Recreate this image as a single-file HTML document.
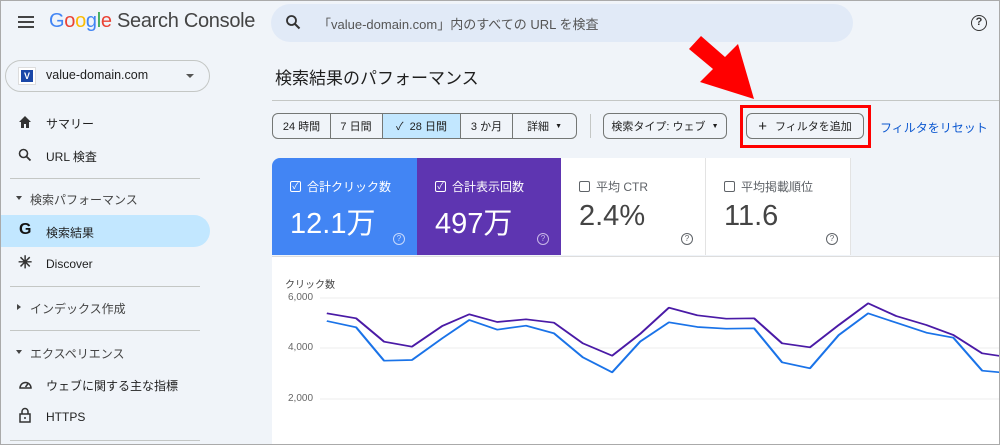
<!DOCTYPE html>
<html><head><meta charset="utf-8"><style>
*{box-sizing:border-box;margin:0;padding:0}
body{width:1000px;height:445px;overflow:hidden;background:#f0f4f9;font-family:"Liberation Sans","Noto Sans CJK JP",sans-serif;color:#1f1f1f;position:relative}
.a{position:absolute}
.frame{left:0;top:0;width:1000px;height:445px;border:1px solid #aaa;z-index:50;pointer-events:none}
.nav{font-size:12px;color:#1f1f1f;left:46px}
.ico{left:18px}
.hr{left:10px;width:190px;height:1px;background:#c4c7c5}
.sec{font-size:12px;color:#444;left:30px}
.seg{top:113px;height:26px;border:1px solid #747775;font-size:11px;color:#1f1f1f;display:flex;align-items:center;justify-content:center}
.card{top:158px;height:97px;width:145px}
.lbl{left:18px;top:20px;font-size:12px;display:flex;align-items:center}
.cb{width:11px;height:11px;border:1.5px solid currentColor;border-radius:2px;margin-right:6px;position:relative;font-size:9px;line-height:8px;text-align:center}
.val{left:18px;top:42px;font-size:29px}
.q{right:12px;bottom:10px;width:12px;height:12px;border:1px solid currentColor;border-radius:50%;font-size:8px;text-align:center;line-height:10px}
</style></head><body>
<div class="a" style="left:18px;top:16px;width:16px;height:2px;background:#444;box-shadow:0 5px 0 #444,0 10px 0 #444"></div>
<div class="a" style="left:49px;top:10px;font-size:20px;letter-spacing:-0.3px"><span style="color:#4285f4">G</span><span style="color:#ea4335">o</span><span style="color:#fbbc05">o</span><span style="color:#4285f4">g</span><span style="color:#34a853">l</span><span style="color:#ea4335">e</span> <span style="color:#444">Search Console</span></div>
<div class="a" style="left:271px;top:4px;width:582px;height:38px;border-radius:19px;background:#e1eaf7"></div>
<svg class="a" style="left:285px;top:14px" width="16" height="16" viewBox="0 0 16 16"><circle cx="6.5" cy="6.5" r="4.5" fill="none" stroke="#333" stroke-width="1.8"/><path d="M10 10l4.5 4.5" stroke="#333" stroke-width="2"/></svg>
<div class="a" style="left:318px;top:14px;font-size:13px;color:#555">「value-domain.com」内のすべての URL を検査</div>
<div class="a" style="left:971px;top:15px;width:16px;height:16px;border:1.7px solid #333;border-radius:50%;font-size:11px;font-weight:bold;text-align:center;line-height:13px;color:#333">?</div>
<div class="a" style="left:5px;top:60px;width:205px;height:32px;border:1px solid #c4c7c5;border-radius:16px"></div>
<div class="a" style="left:18px;top:67px;width:18px;height:18px;background:#fff;border:1px solid #ddd"></div>
<div class="a" style="left:21px;top:70px;width:12px;height:12px;background:#1a47a8;color:#fff;font-size:9px;font-weight:bold;text-align:center;line-height:12px">V</div>
<div class="a" style="left:46px;top:68px;font-size:12.5px">value-domain.com</div>
<div class="a" style="left:186px;top:74px;border:4px solid transparent;border-top:4px solid #555"></div>
<svg class="a ico" style="top:115px" width="14" height="14" viewBox="0 0 14 14"><path d="M7 1L1 7h2v6h3V9h2v4h3V7h2z" fill="#333"/></svg>
<div class="a nav" style="top:115px">サマリー</div>
<svg class="a ico" style="top:148px" width="14" height="14" viewBox="0 0 14 14"><circle cx="5.5" cy="5.5" r="4" fill="none" stroke="#333" stroke-width="1.6"/><path d="M8.5 8.5l4 4" stroke="#333" stroke-width="1.8"/></svg>
<div class="a nav" style="top:148px">URL 検査</div>
<div class="a hr" style="top:178px"></div>
<div class="a" style="left:16px;top:196px;border:3px solid transparent;border-top:4px solid #444"></div>
<div class="a sec" style="top:191px">検索パフォーマンス</div>
<div class="a" style="left:0;top:215px;width:210px;height:32px;background:#c2e7ff;border-radius:0 16px 16px 0"></div>
<div class="a" style="left:19px;top:221px;font-size:16px;font-weight:bold;color:#111">G</div>
<div class="a nav" style="top:224px">検索結果</div>
<div class="a" style="left:18px;top:253px;font-size:17px;font-weight:bold;color:#333">✳</div>
<div class="a nav" style="top:257px">Discover</div>
<div class="a hr" style="top:286px"></div>
<div class="a" style="left:17px;top:304px;border:3px solid transparent;border-left:4px solid #444"></div>
<div class="a sec" style="top:300px">インデックス作成</div>
<div class="a hr" style="top:330px"></div>
<div class="a" style="left:16px;top:350px;border:3px solid transparent;border-top:4px solid #444"></div>
<div class="a sec" style="top:345px">エクスペリエンス</div>
<svg class="a ico" style="top:377px" width="15" height="14" viewBox="0 0 15 14"><path d="M2 11A5.5 5.5 0 1 1 13 11z" fill="none" stroke="#333" stroke-width="1.5"/><path d="M7.5 10l3-4" stroke="#333" stroke-width="1.5"/></svg>
<div class="a nav" style="top:377px">ウェブに関する主な指標</div>
<svg class="a ico" style="top:407px" width="14" height="17" viewBox="0 0 14 17"><path d="M4 7V4.5a3 3 0 0 1 6 0V7" fill="none" stroke="#333" stroke-width="1.5"/><rect x="2" y="7" width="10" height="8" fill="none" stroke="#333" stroke-width="1.5"/><circle cx="7" cy="11" r="1" fill="#333"/></svg>
<div class="a nav" style="top:410px">HTTPS</div>
<div class="a hr" style="top:440px"></div>
<div class="a" style="left:275px;top:64px;font-size:17px;color:#1f1f1f">検索結果のパフォーマンス</div>
<div class="a" style="left:272px;top:100px;width:728px;height:1px;background:#c4c7c5"></div>
<div class="a seg" style="left:272px;width:59px;border-radius:6px 0 0 6px">24 時間</div>
<div class="a seg" style="left:330px;width:53px;border-left:none">7 日間</div>
<div class="a seg" style="left:383px;width:78px;background:#c2e7ff;border-left:none">✓&nbsp; 28 日間</div>
<div class="a seg" style="left:461px;width:52px;border-left:none">3 か月</div>
<div class="a seg" style="left:513px;width:64px;border-left:none;border-radius:0 6px 6px 0">詳細 &nbsp;<span style="font-size:7px">▼</span></div>
<div class="a" style="left:590px;top:114px;width:1px;height:24px;background:#c4c7c5"></div>
<div class="a seg" style="left:603px;width:124px;border-radius:6px">検索タイプ: ウェブ &nbsp;<span style="font-size:7px">▼</span></div>
<div class="a seg" style="left:746px;width:118px;border-radius:6px"><span style="font-size:15px;margin-right:8px">+</span>フィルタを追加</div>
<div class="a" style="left:740px;top:105px;width:131px;height:43px;border:3px solid #ff0000"></div>
<div class="a" style="left:880px;top:119px;font-size:12px;color:#0b57d0">フィルタをリセット</div>
<svg class="a" style="left:680px;top:30px;z-index:5" width="80" height="75" viewBox="680 30 80 75"><polygon points="754,99 738,44 725,57 701,36 689,49 713,69 700,82" fill="#ff0000"/></svg>
<div class="a" style="left:272px;top:256px;width:728px;height:189px;background:#fff;border-top:1px solid #ddd"></div>
<div class="a card" style="left:272px;background:#4285f4;color:#fff;border-radius:8px 0 0 0">
<div class="a lbl"><span class="cb">✓</span>合計クリック数</div><div class="a val">12.1万</div><div class="a q" style="color:#c8dafc">?</div></div>
<div class="a card" style="left:417px;width:144px;background:#5e35b1;color:#fff">
<div class="a lbl"><span class="cb">✓</span>合計表示回数</div><div class="a val">497万</div><div class="a q" style="color:#c9b8e8">?</div></div>
<div class="a card" style="left:561px;background:#fff;color:#5f6368;border-right:1px solid #e3e3e3">
<div class="a lbl"><span class="cb"></span>平均 CTR</div><div class="a val" style="color:#444">2.4%</div><div class="a q">?</div></div>
<div class="a card" style="left:706px;background:#fff;color:#5f6368;border-right:1px solid #e3e3e3">
<div class="a lbl"><span class="cb"></span>平均掲載順位</div><div class="a val" style="color:#444">11.6</div><div class="a q">?</div></div>
<div class="a" style="left:285px;top:276px;font-size:10px;color:#444">クリック数</div>
<div class="a" style="left:288px;top:292px;font-size:10px;color:#666">6,000</div>
<div class="a" style="left:288px;top:342px;font-size:10px;color:#666">4,000</div>
<div class="a" style="left:288px;top:393px;font-size:10px;color:#666">2,000</div>
<svg class="a" style="left:0;top:0" width="1000" height="445">
<g stroke="#eee" stroke-width="1"><path d="M320 298H1000M320 348H1000M320 399H1000"/></g>
<g transform="translate(270,260) scale(0.4655,0.3333)" fill="none" stroke-width="5" stroke-linejoin="round">
<polyline stroke="#4a1aa6" points="122,160 185,175 245,245 305,260 370,198 428,163 488,186 550,178 610,188 672,250 735,287 795,222 857,143 918,166 980,176 1040,175 1100,250 1160,262 1222,195 1285,130 1345,168 1410,195 1468,225 1530,280 1568,288"/>
<polyline stroke="#1a73e8" points="122,183 185,202 245,302 305,300 370,235 428,180 488,209 550,197 610,220 672,292 735,337 795,245 857,187 918,201 980,206 1040,205 1100,307 1160,325 1222,225 1285,160 1345,188 1410,218 1468,233 1530,332 1568,337"/>
</g></svg>
<div class="a frame"></div>
</body></html>
